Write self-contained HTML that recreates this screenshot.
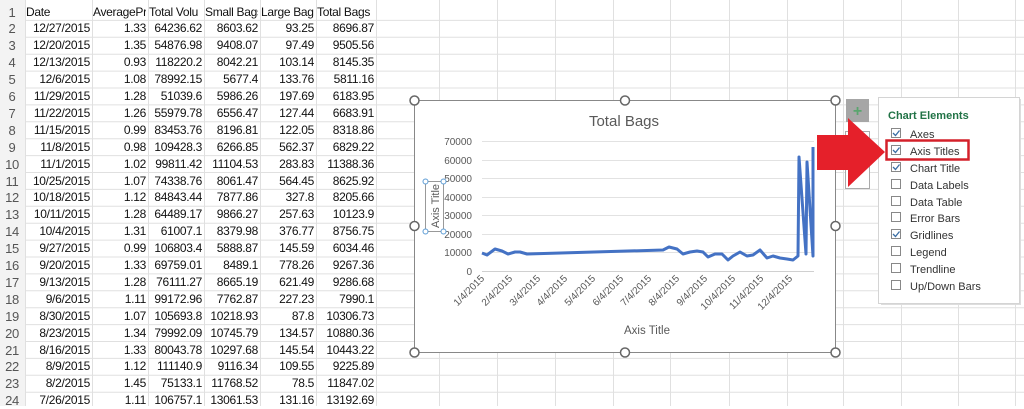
<!DOCTYPE html>
<html><head><style>
body{margin:0;width:1024px;height:406px;overflow:hidden;background:#fff;font-family:"Liberation Sans",sans-serif;position:relative}
.c{position:absolute;font-size:12px;letter-spacing:-0.3px;color:#111;white-space:nowrap;line-height:17px}
.r{text-align:right}
</style></head><body>
<svg width="1024" height="406" style="position:absolute;left:0;top:0">
<g stroke="#e0e0e0" stroke-width="1">
<line x1="25.5" y1="0" x2="25.5" y2="406"/><line x1="92.5" y1="0" x2="92.5" y2="406"/><line x1="148.5" y1="0" x2="148.5" y2="406"/><line x1="204.5" y1="0" x2="204.5" y2="406"/><line x1="260.5" y1="0" x2="260.5" y2="406"/><line x1="316.5" y1="0" x2="316.5" y2="406"/><line x1="376.5" y1="0" x2="376.5" y2="406"/>
<line x1="439.5" y1="0" x2="439.5" y2="406"/><line x1="497.5" y1="0" x2="497.5" y2="406"/><line x1="555.5" y1="0" x2="555.5" y2="406"/><line x1="613.5" y1="0" x2="613.5" y2="406"/><line x1="670.5" y1="0" x2="670.5" y2="406"/><line x1="729.5" y1="0" x2="729.5" y2="406"/><line x1="787.5" y1="0" x2="787.5" y2="406"/><line x1="843.5" y1="0" x2="843.5" y2="406"/><line x1="901.5" y1="0" x2="901.5" y2="406"/><line x1="958.5" y1="0" x2="958.5" y2="406"/><line x1="1015.5" y1="0" x2="1015.5" y2="406"/>
</g>
<g stroke="#e0e0e0" id="rows"></g>
<rect x="0" y="0" width="25" height="406" fill="#f3f3f3"/>
</svg>
<div id="cells"></div>
<script>
var d=[["Date","AveragePr","Total Volu","Small Bags","Large Bags","Total Bags"],
["12/27/2015","1.33","64236.62","8603.62","93.25","8696.87"],["12/20/2015","1.35","54876.98","9408.07","97.49","9505.56"],["12/13/2015","0.93","118220.2","8042.21","103.14","8145.35"],["12/6/2015","1.08","78992.15","5677.4","133.76","5811.16"],["11/29/2015","1.28","51039.6","5986.26","197.69","6183.95"],["11/22/2015","1.26","55979.78","6556.47","127.44","6683.91"],["11/15/2015","0.99","83453.76","8196.81","122.05","8318.86"],["11/8/2015","0.98","109428.3","6266.85","562.37","6829.22"],["11/1/2015","1.02","99811.42","11104.53","283.83","11388.36"],["10/25/2015","1.07","74338.76","8061.47","564.45","8625.92"],["10/18/2015","1.12","84843.44","7877.86","327.8","8205.66"],["10/11/2015","1.28","64489.17","9866.27","257.63","10123.9"],["10/4/2015","1.31","61007.1","8379.98","376.77","8756.75"],["9/27/2015","0.99","106803.4","5888.87","145.59","6034.46"],["9/20/2015","1.33","69759.01","8489.1","778.26","9267.36"],["9/13/2015","1.28","76111.27","8665.19","621.49","9286.68"],["9/6/2015","1.11","99172.96","7762.87","227.23","7990.1"],["8/30/2015","1.07","105693.8","10218.93","87.8","10306.73"],["8/23/2015","1.34","79992.09","10745.79","134.57","10880.36"],["8/16/2015","1.33","80043.78","10297.68","145.54","10443.22"],["8/9/2015","1.12","111140.9","9116.34","109.55","9225.89"],["8/2/2015","1.45","75133.1","11768.52","78.5","11847.02"],["7/26/2015","1.11","106757.1","13061.53","131.16","13192.69"]];
var cx=[25,92,148,204,260,316,376],h="",rl="";
for(var i=0;i<24;i++){var t=3.5+i*16.9;rl+='<line x1="0" x2="1024" y1="'+(t+16.9).toFixed(1)+'" y2="'+(t+16.9).toFixed(1)+'"/>';
h+='<div class="c" style="left:0;width:24px;text-align:center;top:'+t.toFixed(1)+'px;color:#555;font-size:13px">'+(i+1)+'</div>';
for(var j=0;j<6;j++){var hd=i==0;h+='<div class="c'+(hd?'':' r')+'" style="overflow:hidden;left:'+(cx[j]+1)+'px;width:'+(cx[j+1]-cx[j]-3)+'px;top:'+t.toFixed(1)+'px">'+d[i][j]+'</div>';}}
document.getElementById('cells').innerHTML=h;document.getElementById('rows').innerHTML=rl;
</script>
<svg width="1024" height="406" style="position:absolute;left:0;top:0" font-family="Liberation Sans, sans-serif">
<rect x="414.5" y="100.5" width="421" height="252" fill="#fff" stroke="#888"/>
<text x="624" y="126" text-anchor="middle" font-size="15" fill="#595959">Total Bags</text>
<g stroke="#e2e2e2"><line x1="482" x2="814" y1="141.5" y2="141.5"/><line x1="482" x2="814" y1="160.5" y2="160.5"/><line x1="482" x2="814" y1="178.5" y2="178.5"/><line x1="482" x2="814" y1="197.5" y2="197.5"/><line x1="482" x2="814" y1="215.5" y2="215.5"/><line x1="482" x2="814" y1="234.5" y2="234.5"/><line x1="482" x2="814" y1="252.5" y2="252.5"/></g>
<line x1="482" x2="814" y1="271.5" y2="271.5" stroke="#d0d0d0"/>
<g font-size="10" fill="#595959" text-anchor="end"><text x="472" y="145">70000</text><text x="472" y="164">60000</text><text x="472" y="182">50000</text><text x="472" y="201">40000</text><text x="472" y="219">30000</text><text x="472" y="238">20000</text><text x="472" y="256">10000</text><text x="472" y="275">0</text></g>
<g font-size="10" fill="#595959" text-anchor="end">
<text transform="translate(485,279) rotate(-45)">1/4/2015</text><text transform="translate(513,279) rotate(-45)">2/4/2015</text><text transform="translate(541,279) rotate(-45)">3/4/2015</text><text transform="translate(568,279) rotate(-45)">4/4/2015</text><text transform="translate(596,279) rotate(-45)">5/4/2015</text><text transform="translate(624,279) rotate(-45)">6/4/2015</text><text transform="translate(652,279) rotate(-45)">7/4/2015</text><text transform="translate(680,279) rotate(-45)">8/4/2015</text><text transform="translate(708,279) rotate(-45)">9/4/2015</text><text transform="translate(736,279) rotate(-45)">10/4/2015</text><text transform="translate(764,279) rotate(-45)">11/4/2015</text><text transform="translate(793,279) rotate(-45)">12/4/2015</text></g>
<text x="647" y="334" text-anchor="middle" font-size="11.5" fill="#595959">Axis Title</text>
<rect x="425.5" y="181.5" width="18" height="50" fill="none" stroke="#999"/>
<text transform="translate(439,206) rotate(-90)" text-anchor="middle" font-size="11" fill="#595959">Axis Title</text>
<g fill="#fff" stroke="#5b9bd5"><circle cx="425.5" cy="181.5" r="2.5"/><circle cx="443.5" cy="181.5" r="2.5"/><circle cx="425.5" cy="231.5" r="2.5"/><circle cx="443.5" cy="231.5" r="2.5"/></g>
<polyline fill="none" stroke="#4472c4" stroke-width="3" stroke-linejoin="round" points="482,253 487,255 495,249 502,251 508,254 515,252 520,252 527,254 663,250 669,247 677,249 683,254 690,252 697,251 703,252 708,257 715,254 722,254 728,260 733,256 740,252 747,256 753,255 760,250 767,258 773,256 780,258 787,259 793,260 798,256 799,157 806,254 807,162 813,256 813,147"/>
<g fill="#fff" stroke="#666" stroke-width="1.5"><circle cx="414.5" cy="100.5" r="4.5"/><circle cx="625" cy="100.5" r="4.5"/><circle cx="835.5" cy="100.5" r="4.5"/><circle cx="414.5" cy="226" r="4.5"/><circle cx="835.5" cy="226" r="4.5"/><circle cx="414.5" cy="352.5" r="4.5"/><circle cx="625" cy="352.5" r="4.5"/><circle cx="835.5" cy="352.5" r="4.5"/></g>
<rect x="846" y="99" width="23" height="23" fill="#a6a6a6"/>
<text x="857.5" y="116" text-anchor="middle" font-size="16" font-weight="bold" fill="#5aa56e">+</text>
<rect x="845.5" y="131.5" width="24" height="57" fill="#fff" stroke="#aaa"/>
<rect x="880" y="98" width="140" height="206" fill="#ddd" transform="translate(1,1)"/>
<rect x="878.5" y="97.5" width="141" height="206" fill="#fff" stroke="#d4d4d4"/>
<polygon points="817,135 848,135 848,118 885,152 848,187 848,170 817,170" fill="#e5202a"/>
<text x="888" y="119" font-size="11" font-weight="bold" fill="#217346">Chart Elements</text>
<rect x="886.5" y="140.5" width="82" height="19" fill="none" stroke="#d4202a" stroke-width="2.5"/>
<g font-size="11" fill="#333">
<text x="910" y="138">Axes</text><text x="910" y="155">Axis Titles</text><text x="910" y="172">Chart Title</text><text x="910" y="189">Data Labels</text><text x="910" y="206">Data Table</text><text x="910" y="222">Error Bars</text><text x="910" y="239">Gridlines</text><text x="910" y="256">Legend</text><text x="910" y="273">Trendline</text><text x="910" y="290">Up/Down Bars</text></g>
<g fill="#fff" stroke="#888"><rect x="891.5" y="128.5" width="9" height="9"/><rect x="891.5" y="145.5" width="9" height="9"/><rect x="891.5" y="162.5" width="9" height="9"/><rect x="891.5" y="179.5" width="9" height="9"/><rect x="891.5" y="196.5" width="9" height="9"/><rect x="891.5" y="212.5" width="9" height="9"/><rect x="891.5" y="229.5" width="9" height="9"/><rect x="891.5" y="246.5" width="9" height="9"/><rect x="891.5" y="263.5" width="9" height="9"/><rect x="891.5" y="280.5" width="9" height="9"/></g>
<g fill="none" stroke="#3a6ea5" stroke-width="1.3"><polyline points="893,133 895.5,135.5 899.5,130.5"/><polyline points="893,150 895.5,152.5 899.5,147.5"/><polyline points="893,167 895.5,169.5 899.5,164.5"/><polyline points="893,234 895.5,236.5 899.5,231.5"/></g>
</svg>
</body></html>
